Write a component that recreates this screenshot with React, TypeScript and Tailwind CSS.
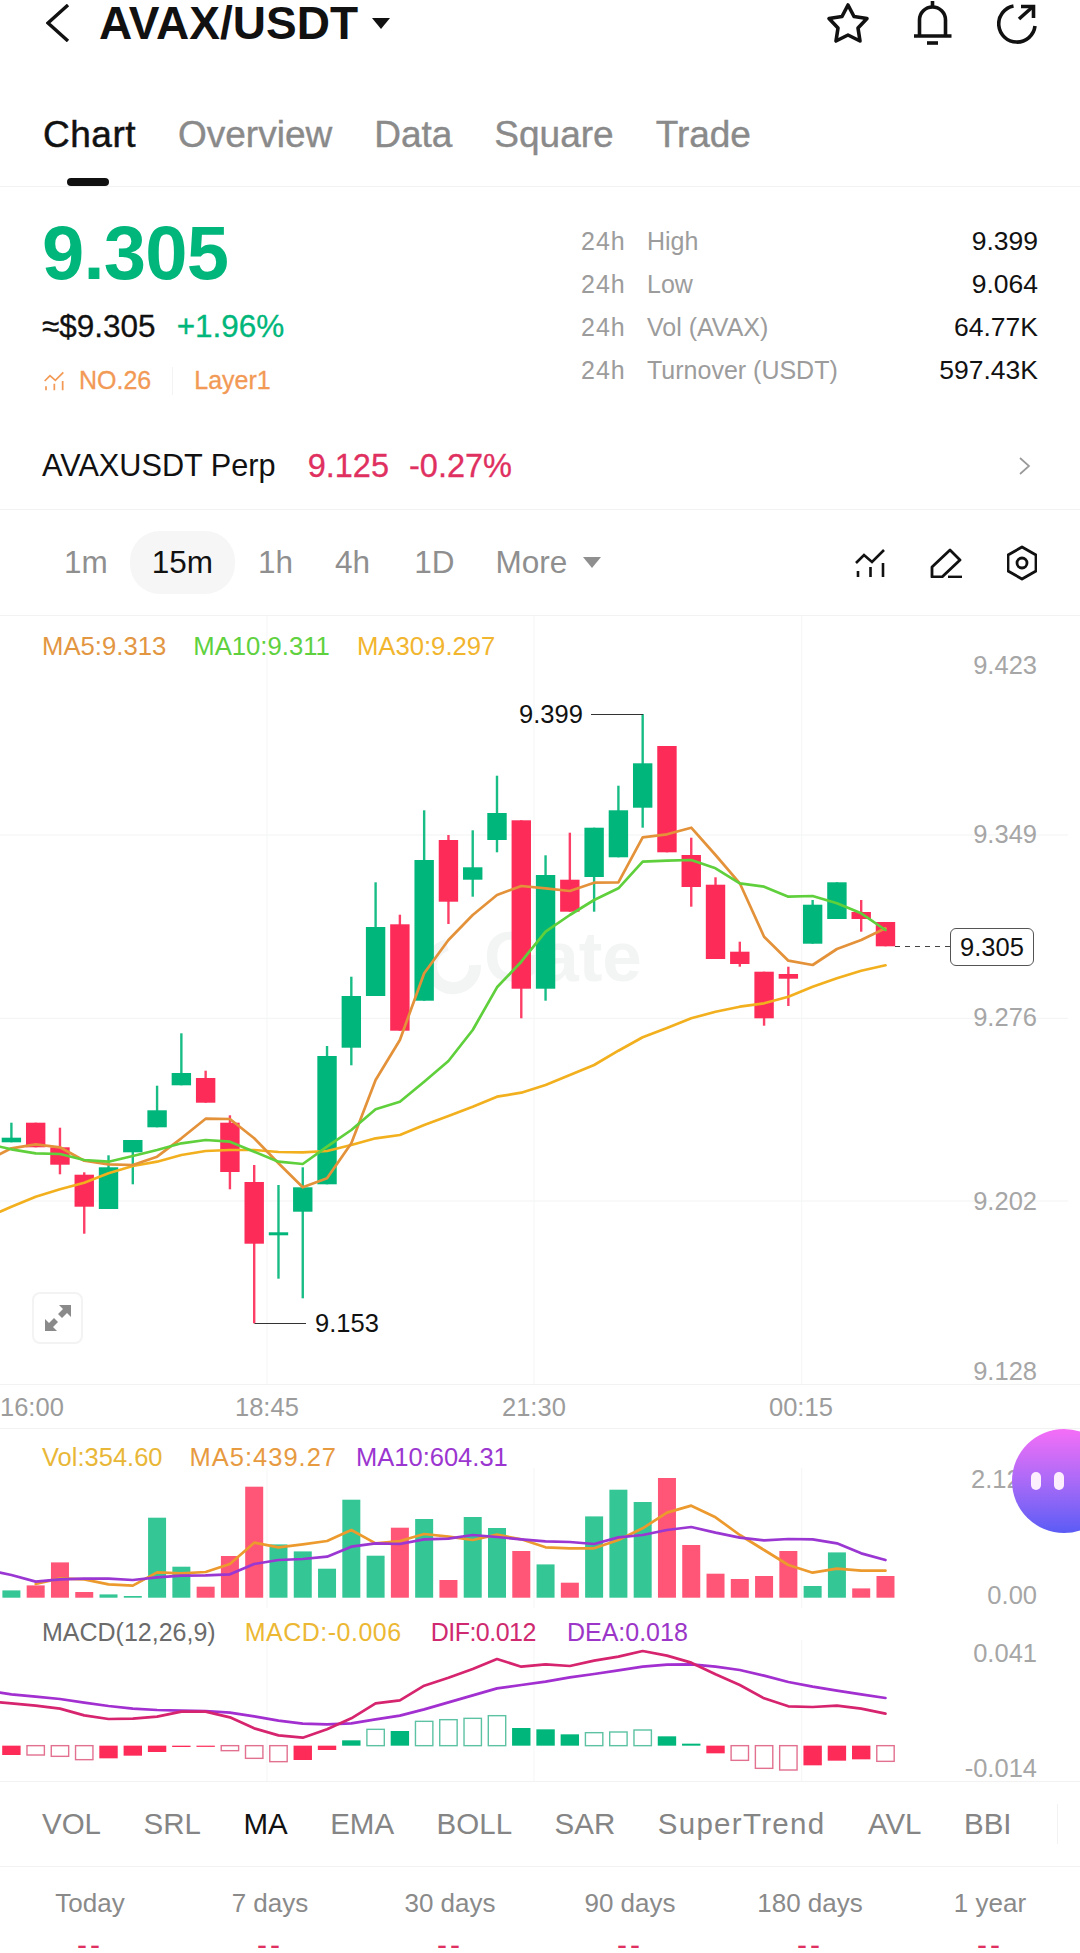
// AVAX/USDT market detail screen
const UP = "#00b67a";
const DOWN = "#fd2b58";
const UP_SOFT = "#34c795";
const DOWN_SOFT = "#ff5576";
const UP_HOLLOW = "#5cc2a3";
const DOWN_HOLLOW = "#e2708f";

const slotX = (i: number) => 11.4 + 24.28 * i;

// [bodyTop, bodyBottom, wickTop, wickBottom, isUp] in page px
const candles: [number, number, number, number, boolean][] = [
  [1137.7, 1142.3, 1122.7, 1142.3, true],
  [1122.7, 1147.3, 1122.7, 1147.3, false],
  [1147.3, 1164.7, 1127.7, 1174.3, false],
  [1174.7, 1206.7, 1172.3, 1233.7, false],
  [1167.3, 1209, 1155.3, 1209, true],
  [1140, 1152.3, 1140, 1184.3, true],
  [1110.3, 1127.3, 1085.7, 1127.3, true],
  [1073, 1085.3, 1033.3, 1085.3, true],
  [1078, 1102.7, 1070.7, 1102.7, false],
  [1122.7, 1172, 1115.3, 1189.3, false],
  [1182, 1243.7, 1165, 1323.3, false],
  [1232.3, 1235.3, 1185, 1278.7, true],
  [1187.3, 1211.7, 1167.3, 1298.3, true],
  [1056, 1184.3, 1046, 1184.3, true],
  [996, 1047.7, 976.7, 1065.3, true],
  [927, 996, 882.3, 996, true],
  [924.3, 1030.7, 914.7, 1030.7, false],
  [860, 1000.7, 810.3, 1000.7, true],
  [840, 901.7, 835, 924, false],
  [867.3, 879.7, 830.3, 896.7, true],
  [813, 840, 775.7, 852.3, true],
  [820.3, 988.7, 820.3, 1018.3, false],
  [875, 988.7, 855.3, 1000.7, true],
  [879.7, 911.7, 832.7, 911.7, false],
  [827.7, 877, 827.7, 911.7, true],
  [810.3, 857.3, 785.7, 857.3, true],
  [763.3, 807.7, 714, 827.7, true],
  [746, 852.3, 746, 852.3, false],
  [855, 887, 837.7, 906.7, false],
  [884.7, 959, 877.3, 959, false],
  [951.7, 964, 941.7, 966.7, false],
  [971.7, 1018.3, 971.7, 1025.7, false],
  [974, 978.7, 966.7, 1006, false],
  [904.7, 943.7, 900, 943.7, true],
  [882.3, 919, 882.3, 919, true],
  [912, 919, 900, 931.7, false],
  [922, 946.3, 922, 946.3, false],
];

const ma5 = [1148.3, 1144.3, 1147.3, 1160.7, 1164.3, 1165, 1156.7, 1138.3, 1118.7, 1119, 1138.3, 1163.3, 1187.3, 1178.3, 1143.3, 1080, 1040, 973.3, 940, 915, 895, 886, 888.3, 891, 882.7, 882.3, 837.3, 834.3, 827.7, 855, 883.3, 936.7, 960.7, 965, 949, 940, 928.3];
const ma10 = [1149.3, 1153.3, 1154, 1160, 1161.7, 1156, 1150, 1143.3, 1140, 1141.7, 1151.7, 1161.7, 1164, 1146.7, 1130, 1109.3, 1101.7, 1081.7, 1061, 1030, 987.3, 961.7, 931.7, 915, 900, 888.3, 861.7, 860.7, 860, 868.3, 883.3, 886.7, 896.7, 896, 903.3, 913.3, 930];
const ma30 = [1206.7, 1196.7, 1189.3, 1182.7, 1173.3, 1166, 1161.7, 1155, 1151, 1150, 1150, 1152, 1152.3, 1151, 1145, 1138.3, 1135, 1125, 1116, 1106.7, 1096.7, 1092.7, 1085, 1075, 1065, 1050.7, 1037.3, 1028, 1018.3, 1011.7, 1006.7, 1003.3, 996.7, 986.7, 978.3, 970.7, 965.3];

const volBase = 1597.7;
const volHeights: [number, boolean][] = [
  [7.3, true], [12.3, false], [35.3, false], [5.7, false], [3.3, true], [1.7, true], [80, true], [31, true], [11, false], [41.7, false],
  [111, false], [53.3, true], [46.3, true], [29, true], [98, true], [42, true], [70, false], [78.7, true], [17.7, false], [80.7, true],
  [69.7, true], [46.7, false], [33.3, true], [15, false], [81.3, true], [108, true], [95.7, true], [119.7, false], [52.7, false], [24, false],
  [18.7, false], [21.7, false], [46.7, false], [11.7, true], [45.3, true], [9.3, false], [21.7, false],
];

// lower panels: values read off in 1/3 px steps, measured from y=1440
const lowY = (v: number) => 1440 + v / 3;

const volMa5 = [null, 432, 415, 418, 433, 437, 397, 400, 396, 372, 308, 322, 313, 303, 270, 310, 303, 282, 290, 300, 284, 298, 322, 325, 325, 300, 265, 218, 197, 232, 285, 330, 375, 398, 386, 392, 392];
const volMa10 = [405, 425, 418, 416, 416, 420, 412, 407, 406, 403, 372, 360, 357, 350, 320, 310, 312, 298, 296, 285, 291, 298, 304, 306, 312, 292, 285, 270, 261, 278, 293, 301, 297, 298, 310, 340, 360];

const dif = [790, 797, 806, 826, 837, 836, 830, 815, 815, 832, 865, 886, 893, 868, 835, 790, 781, 737, 713, 687, 657, 680, 673, 678, 662, 650, 633, 647, 668, 703, 735, 775, 799, 801, 797, 806, 821];
const dea = [763, 770, 777, 788, 798, 806, 810, 812, 813, 818, 829, 842, 851, 853, 850, 838, 827, 808, 787, 766, 745, 735, 725, 712, 702, 691, 680, 674, 673, 680, 690, 707, 726, 740, 752, 763, 774];

// [far end of bar, hollow]
const macdBars: [number, boolean][] = [
  [945, false], [945, true], [949, true], [959, true], [955, false], [947, false], [936, false], [921, false], [919, false], [932, true],
  [955, true], [965, true], [960, false], [930, false], [901, false], [868, true], [873, false], [844, true], [839, true], [835, true],
  [827, true], [864, false], [868, false], [883, false], [878, true], [876, true], [870, true], [889, false], [911, false], [940, false],
  [961, true], [985, true], [990, true], [976, false], [962, false], [958, false], [964, true],
];
const macdZero = 917;

const toPoints = (ys: (number | null)[], startY?: number) => {
  const pts = ys.flatMap((y, i) => (y === null ? [] : [`${slotX(i)},${y}`]));
  return (startY !== undefined ? `0,${startY} ` : "") + pts.join(" ");
};

function ChartLine({ points, color }: { points: string; color: string }) {
  return <polyline points={points} fill="none" stroke={color} strokeWidth={2.7} strokeLinejoin="round" strokeLinecap="round" />;
}

function AxisLabel({ y, children }: { y: number; children: string }) {
  return (
    <text x={1037} y={y} textAnchor="end" dominantBaseline="central" fontSize={25.5} fill="#a6a6a6">
      {children}
    </text>
  );
}

function MainChart() {
  return (
    <svg viewBox="0 616 1080 813" className="absolute inset-0 h-[813px] w-[1080px]">
      {[835, 1018.3, 1201].map((y) => (
        <line key={y} x1={0} x2={1068} y1={y} y2={y} stroke="#f2f3f3" strokeWidth={1} />
      ))}
      {[267, 534, 801.7].map((x) => (
        <line key={x} x1={x} x2={x} y1={616} y2={1384} stroke="#f4f5f5" strokeWidth={1} />
      ))}

      {/* watermark */}
      <g fill="none" stroke="#f3f4f4" strokeWidth={12}>
        <path d="M 447 945 A 22 22 0 1 0 475 965" />
      </g>
      <text x={484} y={981} fontSize={71} fontWeight={700} fill="#f3f4f4">
        Gate
      </text>

      {candles.map(([top, bottom, wickTop, wickBottom, up], i) => {
        const color = up ? UP : DOWN;
        const x = slotX(i);
        return (
          <g key={i}>
            <line x1={x} x2={x} y1={wickTop} y2={wickBottom} stroke={color} strokeWidth={2.4} opacity={0.9} />
            <rect x={x - 9.7} y={top} width={19.4} height={bottom - top} fill={color} />
          </g>
        );
      })}

      <ChartLine points={toPoints(ma30, 1211.7)} color="#f2b01e" />
      <ChartLine points={toPoints(ma5, 1154)} color="#e4923a" />
      <ChartLine points={toPoints(ma10, 1146.7)} color="#5fd03c" />

      <AxisLabel y={665}>9.423</AxisLabel>
      <AxisLabel y={834}>9.349</AxisLabel>
      <AxisLabel y={1017}>9.276</AxisLabel>
      <AxisLabel y={1201}>9.202</AxisLabel>
      <AxisLabel y={1371}>9.128</AxisLabel>

      <polyline points="591,714.5 643,714.5" stroke="#333" strokeWidth={1} fill="none" />
      <text x={551} y={714} textAnchor="middle" dominantBaseline="central" fontSize={25.5} fill="#111">
        9.399
      </text>
      <polyline points="254.5,1323.5 306,1323.5" stroke="#333" strokeWidth={1} fill="none" />
      <text x={347} y={1323} textAnchor="middle" dominantBaseline="central" fontSize={25.5} fill="#111">
        9.153
      </text>

      <line x1={895} x2={950} y1={946.5} y2={946.5} stroke="#444" strokeWidth={1.2} strokeDasharray="5 5" />
    </svg>
  );
}

function VolumeChart() {
  return (
    <svg viewBox="0 1429 1080 179" className="absolute inset-0 h-[179px] w-[1080px]">
      {[267, 534, 801.7].map((x) => (
        <line key={x} x1={x} x2={x} y1={1468} y2={1608} stroke="#f4f5f5" strokeWidth={1} />
      ))}
      {volHeights.map(([h, up], i) => (
        <rect key={i} x={slotX(i) - 9} y={volBase - h} width={18} height={h} fill={up ? UP_SOFT : DOWN_SOFT} />
      ))}
      <ChartLine points={toPoints(volMa5.map((v) => (v === null ? null : lowY(v))))} color="#ec9a2e" />
      <ChartLine points={toPoints(volMa10.map(lowY), lowY(398))} color="#9a36d2" />
      <text x={971} y={1479} dominantBaseline="central" fontSize={25.5} fill="#a6a6a6">
        2.12K
      </text>
      <AxisLabel y={1595}>0.00</AxisLabel>
    </svg>
  );
}

function MacdChart() {
  return (
    <svg viewBox="0 1608 1080 173" className="absolute inset-0 h-[173px] w-[1080px]">
      {[267, 534, 801.7].map((x) => (
        <line key={x} x1={x} x2={x} y1={1640} y2={1781} stroke="#f4f5f5" strokeWidth={1} />
      ))}
      {macdBars.map(([end, hollow], i) => {
        const y1 = lowY(Math.min(end, macdZero));
        const y2 = lowY(Math.max(end, macdZero));
        const up = end < macdZero;
        const x = slotX(i);
        if (hollow) {
          return <rect key={i} x={x - 8.7} y={y1} width={17.4} height={y2 - y1} fill="#fff" stroke={up ? UP_HOLLOW : DOWN_HOLLOW} strokeWidth={1.4} />;
        }
        return <rect key={i} x={x - 9.2} y={y1} width={18.4} height={Math.max(y2 - y1, 1.2)} fill={up ? UP : DOWN} />;
      })}
      <ChartLine points={toPoints(dea.map(lowY), lowY(758))} color="#a22fd0" />
      <ChartLine points={toPoints(dif.map(lowY), lowY(787))} color="#d6246e" />
      <AxisLabel y={1652.7}>0.041</AxisLabel>
      <AxisLabel y={1767.5}>-0.014</AxisLabel>
    </svg>
  );
}

function Legend({ items, className }: { items: [string, string, string?][]; className: string }) {
  return (
    <div className={`absolute left-[42px] flex leading-[30px] ${className}`}>
      {items.map(([label, color, extra]) => (
        <span key={label} className={extra} style={{ color }}>
          {label}
        </span>
      ))}
    </div>
  );
}

function StarIcon() {
  return (
    <svg viewBox="0 0 44 44" className="h-[44px] w-[44px]" fill="none" stroke="#111" strokeWidth={3.6} strokeLinejoin="round">
      <polygon points="22,4 28,15.5 41,17.5 32,27 34,40 22,34 10,40 12,27 3,17.5 16,15.5" />
    </svg>
  );
}

function BellIcon() {
  return (
    <svg viewBox="913 0 40 46" className="h-[46px] w-[40px]" fill="none" stroke="#111" strokeWidth={3.6}>
      <path d="M919.5 36V20a13 13 0 0 1 26 0V36" />
      <path d="M914 36H951.5" />
      <path d="M932.5 1V7" />
      <path d="M927 43H938" />
    </svg>
  );
}

function ShareIcon() {
  return (
    <svg viewBox="997 2 40 44" className="h-[44px] w-[40px]" fill="none" stroke="#111" strokeWidth={3.6}>
      <path d="M1013.5 7A18.2 18.2 0 1 0 1035 27" />
      <path d="M1019 20L1033 7.5" />
      <path d="M1021 7.5H1033.5V19" />
    </svg>
  );
}

function ChartToolIcon({ color = "#111", size = 30 }: { color?: string; size?: number }) {
  return (
    <svg viewBox="0 0 30 30" style={{ width: size, height: size }} fill="none" stroke={color} strokeWidth={2.6}>
      <path d="M1 15L9 7L17 14L29 2" />
      <path d="M3 23V29M15.5 19V29M28 15V29" />
    </svg>
  );
}

function PencilIcon() {
  return (
    <svg viewBox="0 0 32 30" className="h-[30px] w-[32px]" fill="none" stroke="#111" strokeWidth={2.8}>
      <path d="M2 29V19L20 2L30 12L12 29Z" strokeLinejoin="round" />
      <path d="M18 29H32" />
    </svg>
  );
}

function HexIcon() {
  return (
    <svg viewBox="1 0 30 36" className="h-[36px] w-[30px]" fill="none" stroke="#111" strokeWidth={2.8}>
      <polygon points="16,2 30,10 30,26 16,34 2,26 2,10" strokeLinejoin="round" />
      <circle cx={16} cy={18} r={5} />
    </svg>
  );
}

function Caret({ className }: { className: string }) {
  return (
    <svg viewBox="0 0 18 11" className={className}>
      <polygon points="0,0 18,0 9,11" fill="currentColor" />
    </svg>
  );
}

const stats = [
  ["High", "9.399"],
  ["Low", "9.064"],
  ["Vol (AVAX)", "64.77K"],
  ["Turnover (USDT)", "597.43K"],
];

export default function App() {
  return (
    <div className="relative h-[1953px] w-[1080px] overflow-hidden bg-white text-[#111] [font-family:'Liberation_Sans',Arial,sans-serif]">
      {/* top bar */}
      <header className="flex h-[46px] items-center justify-between pl-[46px] pr-[43px]">
        <div className="flex items-center">
          <svg viewBox="0 0 24 38" className="h-[38px] w-[24px]" fill="none" stroke="#111" strokeWidth={3.4}>
            <path d="M22 1L2 19L22 37" />
          </svg>
          <span className="ml-[29px] text-[46px] font-bold leading-[46px]">AVAX/USDT</span>
          <Caret className="ml-[14px] h-[11px] w-[18px] text-[#111]" />
        </div>
        <div className="flex items-center">
          <StarIcon />
          <div className="ml-[43px]">
            <BellIcon />
          </div>
          <div className="ml-[44px]">
            <ShareIcon />
          </div>
        </div>
      </header>

      {/* tabs */}
      <nav className="flex h-[141px] gap-[42px] border-b border-[#f2f2f2] pl-[43px] pr-[42px] pt-[67px] text-[37px] leading-[44px] text-[#8a8a8a]">
        <div className="relative tracking-[0.5px] text-[#111] [-webkit-text-stroke:0.5px_#111]">
          Chart
          <div className="absolute left-[24px] top-[65px] h-[8px] w-[42px] rounded-full bg-[#111]" />
        </div>
        <div className="[-webkit-text-stroke:0.4px_#8a8a8a]">Overview</div>
        <div className="[-webkit-text-stroke:0.4px_#8a8a8a]">Data</div>
        <div className="[-webkit-text-stroke:0.4px_#8a8a8a]">Square</div>
        <div className="[-webkit-text-stroke:0.4px_#8a8a8a]">Trade</div>
      </nav>

      {/* price block */}
      <section className="flex h-[236px] justify-between px-[42px]">
        <div>
          <div className="mt-[28px] text-[76px] font-bold leading-[76px] tracking-[-0.8px] text-[#00b67a]">9.305</div>
          <div className="mt-[16px] flex h-[40px] items-center gap-[21px] text-[31.5px] [-webkit-text-stroke:0.3px]">
            <span>≈$9.305</span>
            <span className="text-[#00b67a]">+1.96%</span>
          </div>
          <div className="mt-[17px] flex h-[34px] items-center text-[25px] text-[#f29a55] [-webkit-text-stroke:0.3px]">
            <div className="ml-[2px]">
              <ChartToolIcon color="#f29a55" size={20} />
            </div>
            <span className="ml-[15px]">NO.26</span>
            <div className="ml-[21px] h-[28px] w-px bg-[#f3f3f3]" />
            <span className="ml-[21px]">Layer1</span>
          </div>
        </div>
        <div className="w-[457px] pt-[33px] text-[25px] leading-[43px]">
          {stats.map(([label, value]) => (
            <div key={label} className="flex h-[43px] items-center">
              <span className="w-[66px] tracking-[1px] text-[#9c9c9c]">24h</span>
              <span className="text-[#9c9c9c]">{label}</span>
              <span className="ml-auto text-[26.5px]">{value}</span>
            </div>
          ))}
        </div>
      </section>

      {/* perp row */}
      <section className="flex h-[87px] items-center border-b border-[#f2f2f2] px-[42px] text-[30.7px]">
        <span>AVAXUSDT Perp</span>
        <span className="ml-[32px] text-[32.5px] text-[#e0305f] [-webkit-text-stroke:0.3px]">9.125</span>
        <span className="ml-[20px] text-[32.5px] text-[#e0305f] [-webkit-text-stroke:0.3px]">-0.27%</span>
        <svg viewBox="0 0 13 18" className="ml-auto mr-[7px] h-[18px] w-[13px]" fill="none" stroke="#9a9a9a" strokeWidth={1.7}>
          <path d="M2 1L11 9L2 17" />
        </svg>
      </section>

      {/* intervals */}
      <section className="flex h-[106px] items-center border-b border-[#f2f2f2] pl-[42px] pr-[43px] text-[31.5px] text-[#8f8f8f]">
        <span className="px-[22px]">1m</span>
        <span className="flex h-[63px] items-center rounded-[30px] bg-[#f6f6f6] px-[22px] text-[#111]">15m</span>
        <span className="pl-[23px] pr-[20px]">1h</span>
        <span className="px-[22px]">4h</span>
        <span className="pl-[22px] pr-[19px]">1D</span>
        <span className="pl-[22px]">More</span>
        <Caret className="ml-[16px] h-[11px] w-[18px] text-[#8f8f8f]" />
        <div className="ml-auto flex items-center">
          <ChartToolIcon />
          <div className="ml-[45px]">
            <PencilIcon />
          </div>
          <div className="ml-[45px]">
            <HexIcon />
          </div>
        </div>
      </section>

      {/* candlesticks + time axis */}
      <section className="relative h-[813px]">
        <MainChart />
        <Legend
          className="top-[15px] gap-[27px] text-[25.7px]"
          items={[
            ["MA5:9.313", "#e39642"],
            ["MA10:9.311", "#5fd13f"],
            ["MA30:9.297", "#f2b52e"],
          ]}
        />
        <button className="absolute left-[32px] top-[676px] flex h-[52px] w-[51px] items-center justify-center rounded-[8px] border-2 border-[#f3f3f3] bg-white">
          <svg viewBox="0 0 26 26" className="h-[26px] w-[26px]" fill="#8a8a8a">
            <polygon points="14,0 26,0 26,12 22,8 17,13 13,9 18,4" />
            <polygon points="0,26 0,14 4,18 9,13 13,17 8,22 12,26" />
          </svg>
        </button>
        <div className="absolute left-[950px] top-[312px] flex h-[38px] w-[84px] items-center justify-center rounded-[6px] border border-[#555] bg-white text-[25.5px]">
          9.305
        </div>
        <div className="absolute inset-x-0 top-[768px] h-[45px] border-y border-[#f2f2f2] text-[25.5px] leading-[45px] text-[#9c9c9c]">
          <span className="absolute left-0 top-0">16:00</span>
          <span className="absolute left-[235px] top-0">18:45</span>
          <span className="absolute left-[502px] top-0">21:30</span>
          <span className="absolute left-[769px] top-0">00:15</span>
        </div>
      </section>

      {/* volume */}
      <section className="relative h-[179px]">
        <VolumeChart />
        <Legend
          className="top-[13px] gap-[27px] text-[25.5px]"
          items={[
            ["Vol:354.60", "#e9b737"],
            ["MA5:439.27", "#e79a3f", "mr-[-8px] tracking-[1px]"],
            ["MA10:604.31", "#9b36d0"],
          ]}
        />
      </section>

      {/* macd */}
      <section className="relative h-[174px] border-b border-[#f2f2f2]">
        <MacdChart />
        <Legend
          className="top-[9px] gap-[29px] text-[25px]"
          items={[
            ["MACD(12,26,9)", "#6b6b6b"],
            ["MACD:-0.006", "#ecb833", "tracking-[0.5px]"],
            ["DIF:0.012", "#cf2a70", "mr-[2px] tracking-[-0.5px]"],
            ["DEA:0.018", "#9b36c8"],
          ]}
        />
      </section>

      {/* indicators */}
      <section className="flex h-[85px] items-center gap-[42.5px] border-b border-[#f2f2f2] px-[42px] text-[29.5px] text-[#858585]">
        <span>VOL</span>
        <span>SRL</span>
        <span className="text-[#111]">MA</span>
        <span>EMA</span>
        <span>BOLL</span>
        <span>SAR</span>
        <span className="tracking-[1.3px]">SuperTrend</span>
        <span>AVL</span>
        <span>BBI</span>
        <div className="ml-[3px] h-[40px] w-px shrink-0 bg-[#f2f2f2]" />
      </section>

      {/* period returns */}
      <section className="grid grid-cols-6 pt-[18px] text-center">
        {["Today", "7 days", "30 days", "90 days", "180 days", "1 year"].map((label) => (
          <div key={label}>
            <div className="text-[26px] leading-[36px] text-[#8a8a8a]">{label}</div>
            <div className="mt-[16px] text-[30px] leading-[16px] tracking-[3px] text-[#e0305f]">--</div>
          </div>
        ))}
      </section>

      {/* floating assistant */}
      <div className="absolute left-[1012px] top-[1429px] flex h-[104px] w-[104px] items-center rounded-full bg-linear-to-b from-[#f56df7] to-[#5a5bf5] pl-[19px]">
        <div className="h-[18px] w-[10px] rounded-full bg-[#fdeefd]" />
        <div className="ml-[13px] h-[18px] w-[10px] rounded-full bg-[#fdeefd]" />
      </div>
    </div>
  );
}
